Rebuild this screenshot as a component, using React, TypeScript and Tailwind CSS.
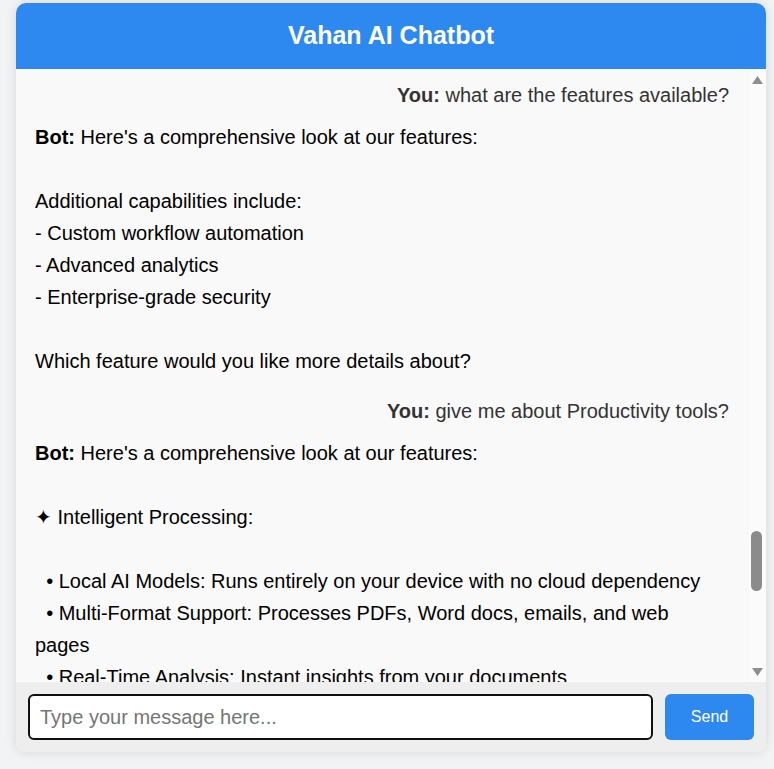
import React, { useLayoutEffect, useRef, useState } from 'react';

type Message = { from: 'user' | 'bot'; text: string };

const FULL_FEATURES = [
  "Here's a comprehensive look at our features:",
  '',
  '✦ Intelligent Processing:',
  '',
  '  • Local AI Models: Runs entirely on your device with no cloud dependency',
  '  • Multi-Format Support: Processes PDFs, Word docs, emails, and web pages',
  '  • Real-Time Analysis: Instant insights from your documents',
  '',
  '✦ Productivity Tools:',
  '',
  '  • Smart Summaries: Condense long reports into key takeaways',
  '  • Task Extraction: Pulls action items and deadlines from your files',
  '  • Quick Search: Find any passage across all your documents',
  '',
  '✦ Privacy & Security:',
  '',
  '  • Offline First: Your data never leaves your machine',
  '  • Encrypted Storage: All indexes are stored securely',
  '  • No Tracking: Zero telemetry or usage logging',
  '',
  '✦ Customization:',
  '',
  '  • Custom Prompts: Tailor answers to your workflow',
  '',
  '✦ Integrations:',
  '',
  '  • File Sync: Watches folders and indexes new documents',
  '',
  'Which feature would you like more details about?',
].join('\n');

const SHORT_FEATURES = [
  "Here's a comprehensive look at our features:",
  '',
  'Additional capabilities include:',
  '- Custom workflow automation',
  '- Advanced analytics',
  '- Enterprise-grade security',
  '',
  'Which feature would you like more details about?',
].join('\n');

const HISTORY: Message[] = [
  { from: 'user', text: 'hi' },
  { from: 'bot', text: "Hello! I'm Vahan AI, your private document assistant.\nHow can I help you today?" },
  { from: 'user', text: 'who made you?' },
  { from: 'bot', text: 'I was built by the Vahan team.' },
  { from: 'user', text: 'what can you do?' },
  { from: 'bot', text: FULL_FEATURES },
  { from: 'user', text: 'is my data safe?' },
  {
    from: 'bot',
    text: [
      'Absolutely. Privacy is at the core of Vahan AI:',
      '',
      '  • All processing happens locally on your device',
      '  • Documents are never uploaded to any server',
      '  • Indexes are encrypted at rest',
      '  • You can clear your history at any time',
      '',
      'Anything else you would like to know?',
    ].join('\n'),
  },
  { from: 'user', text: 'what are the features available?' },
  { from: 'bot', text: FULL_FEATURES },
  { from: 'user', text: 'how do I get started?' },
  {
    from: 'bot',
    text: [
      'Getting started is easy:',
      '',
      '  1. Download and install the Vahan AI app',
      '  2. Choose a folder with your documents',
      '  3. Wait for the initial indexing to finish',
      '  4. Start asking questions in this chat',
      '',
      'Indexing usually takes only a few minutes.',
      '',
      'Would you like tips on organizing your files?',
    ].join('\n'),
  },
  { from: 'user', text: 'does it work offline?' },
  { from: 'bot', text: 'Yes! Everything runs locally, so you can use Vahan AI\nwithout an internet connection.' },
  { from: 'user', text: 'which file types are supported?' },
  {
    from: 'bot',
    text: [
      'Vahan AI supports the following formats:',
      '',
      '  • PDF documents',
      '  • Word files (.doc, .docx)',
      '  • Emails (.eml, .msg)',
      '  • Web pages (.html)',
      '',
      'More formats are coming soon!',
    ].join('\n'),
  },
  { from: 'user', text: 'tell me about integrations' },
  { from: 'bot', text: FULL_FEATURES },
  { from: 'user', text: 'thanks' },
  { from: 'bot', text: "You're welcome! Let me know if there's anything else\nyou'd like to explore." },
];

const RECENT: Message[] = [
  { from: 'user', text: 'what are the features available?' },
  { from: 'bot', text: SHORT_FEATURES },
  { from: 'user', text: 'give me about Productivity tools?' },
  { from: 'bot', text: FULL_FEATURES },
];

const Bubble = React.forwardRef<HTMLDivElement, { msg: Message }>(({ msg }, ref) =>
  msg.from === 'user' ? (
    <div ref={ref} className="mb-[10px] text-right text-[#333] whitespace-pre-wrap">
      <strong>You:</strong> {msg.text}
    </div>
  ) : (
    <div ref={ref} className="mb-[18px] max-w-[680px] text-black whitespace-pre-wrap">
      <strong>Bot:</strong> {msg.text}
    </div>
  )
);

const Arrow = ({ down }: { down?: boolean }) => (
  <svg width="11" height="8" viewBox="0 0 11 8" className="fill-[#8f8f8f]">
    <polygon points={down ? '0,0 11,0 5.5,8' : '5.5,0 11,8 0,8'} />
  </svg>
);

export default function App() {
  const [input, setInput] = useState('');
  const [thumb, setThumb] = useState({ top: 0, height: 0 });
  const listRef = useRef<HTMLDivElement>(null);
  const trackRef = useRef<HTMLDivElement>(null);
  const anchorRef = useRef<HTMLDivElement>(null);

  const updateThumb = () => {
    const el = listRef.current;
    const track = trackRef.current;
    if (!el || !track) return;
    const h = track.clientHeight;
    const size = Math.max(20, (h * el.clientHeight) / el.scrollHeight);
    const top = ((h - size) * el.scrollTop) / Math.max(1, el.scrollHeight - el.clientHeight);
    setThumb({ top, height: size });
  };

  // keep the view on the latest exchange
  useLayoutEffect(() => {
    if (listRef.current && anchorRef.current) {
      listRef.current.scrollTop = anchorRef.current.offsetTop - 10;
    }
    updateThumb();
  }, []);

  return (
    <div className="min-h-[769px] bg-[#f2f3f5] pl-4 pt-[3px] font-['Liberation_Sans',Arial,sans-serif]">
      <div className="flex h-[749px] w-[750px] flex-col overflow-hidden rounded-[10px] bg-white shadow-[0_0_12px_rgba(0,0,0,0.12)]">
        <div className="flex h-[66px] shrink-0 items-center justify-center bg-[#2d89ef]">
          <h1 className="text-[25px] font-bold text-white">Vahan AI Chatbot</h1>
        </div>

        <div className="flex min-h-0 flex-1 bg-[#f9f9f9]">
          <div
            ref={listRef}
            onScroll={updateThumb}
            className="relative flex-1 overflow-y-auto py-5 pl-[19px] pr-5 text-[20px] leading-[32px] [scrollbar-width:none]"
          >
            {HISTORY.map((m, i) => (
              <Bubble key={'h' + i} msg={m} />
            ))}
            {RECENT.map((m, i) => (
              <Bubble key={'r' + i} msg={m} ref={i === 0 ? anchorRef : undefined} />
            ))}
          </div>

          {/* scrollbar */}
          <div className="flex w-[17px] shrink-0 flex-col bg-[#fbfbfb]">
            <div className="flex h-[17px] shrink-0 justify-center pt-[7px]">
              <Arrow />
            </div>
            <div ref={trackRef} className="relative flex-1">
              <div
                className="absolute left-[2px] w-[11px] rounded-full bg-[#8b8b8b]"
                style={{ top: thumb.top, height: thumb.height }}
              />
            </div>
            <div className="flex h-[17px] shrink-0 justify-center pt-[3px]">
              <Arrow down />
            </div>
          </div>
        </div>

        <div className="flex shrink-0 gap-3 bg-[#eeeeee] p-3">
          <input
            value={input}
            onChange={(e) => setInput(e.target.value)}
            placeholder="Type your message here..."
            className="h-[46px] flex-1 rounded-md border-2 border-[#101010] bg-white px-[10px] text-[20px] text-black outline-none placeholder:text-[#757575]"
          />
          <button className="h-[46px] w-[89px] rounded-md bg-[#2d89ef] text-[16px] text-white">Send</button>
        </div>
      </div>
    </div>
  );
}
